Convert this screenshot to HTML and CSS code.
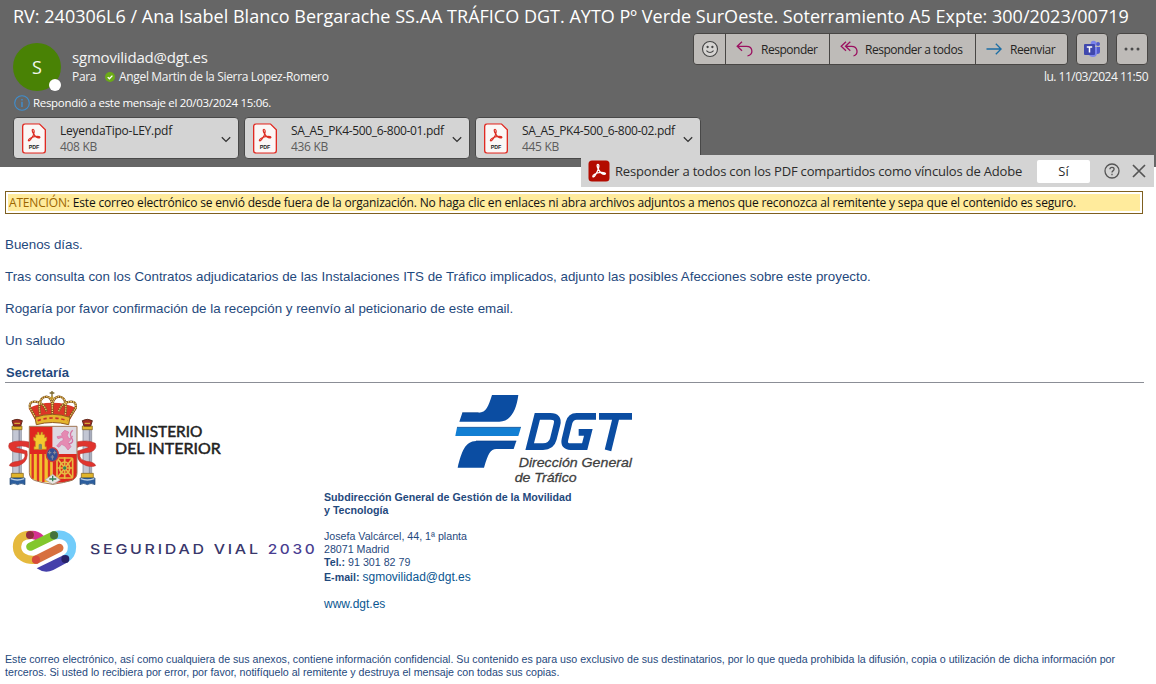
FILE: index.html
```html
<!DOCTYPE html>
<html lang="es">
<head>
<meta charset="utf-8">
<title>RV: 240306L6</title>
<link rel="stylesheet" href="styles.css">
</head>
<body>
<svg class="defs" width="0" height="0" aria-hidden="true">
  <symbol id="pdf" viewBox="0 0 72 92">
    <path d="M10 2H52L70 20V82Q70 90 62 90H10Q2 90 2 82V10Q2 2 10 2Z" fill="#fbf7f6" stroke="#e02a22" stroke-width="4"/>
    <path d="M34 19C29 18 30 25 35 32C39 39 46 45 52 44C57 42 50 38 40 40C30 42 19 47 19 52C22 56 29 45 33 38C37 30 38 20 34 19Z" fill="none" stroke="#dc2c22" stroke-width="3.6"/>
  </symbol>
  <symbol id="chev" viewBox="0 0 10 7"><path d="M.8 1.2L5 5.4L9.2 1.2" fill="none" stroke="#333" stroke-width="1.3"/></symbol>
</svg>
<header class="head">
  <h1 class="subject">RV: 240306L6 / Ana Isabel Blanco Bergarache SS.AA TRÁFICO DGT. AYTO Pº Verde SurOeste. Soterramiento A5 Expte: 300/2023/00719</h1>
  <div class="meta">
    <div class="avatar">S<span class="presence"></span></div>
    <div class="people">
      <div class="from">sgmovilidad@dgt.es</div>
      <div class="to"><span class="para">Para</span>
        <svg class="ok" viewBox="0 0 10 10"><circle cx="5" cy="5" r="5" fill="#6bab17"/><path d="M2.7 5.1L4.4 6.8L7.4 3.6" fill="none" stroke="#fff" stroke-width="1.3"/></svg>
        <span class="toname">Angel Martin de la Sierra Lopez-Romero</span></div>
    </div>
    <div class="side">
      <div class="actions">
        <div class="group">
          <button class="btn smile"><svg width="18" height="18" viewBox="0 0 18 18" fill="none" stroke="#454545" stroke-width="1.1"><circle cx="9" cy="9" r="7.5" fill="#d6d4d2"/><path d="M5.4 10.6Q9 14.3 12.6 10.6"/><circle cx="6.6" cy="7" r=".6" fill="#454545"/><circle cx="11.4" cy="7" r=".6" fill="#454545"/></svg></button>
          <button class="btn reply"><svg width="17" height="16" viewBox="0 0 17 16" fill="none" stroke="#9b1060" stroke-width="1.3"><path d="M6 .8L1.2 5.3L6 9.8M1.2 5.3H10.5C17.5 5.3 17.5 14.5 11.5 14.8"/></svg><span>Responder</span></button>
          <button class="btn all"><svg width="18" height="16" viewBox="0 0 18 16" fill="none" stroke="#9b1060" stroke-width="1.3"><path d="M6 .8L1.2 5.3L6 9.8M10.3 .8L5.5 5.3L10.3 9.8M5.5 5.3H11.5C18.5 5.3 18.5 14.5 13.5 14.8"/></svg><span>Responder a todos</span></button>
          <button class="btn fwd"><svg width="16" height="12" viewBox="0 0 16 12" fill="none" stroke="#1c6ea4" stroke-width="1.3"><path d="M.5 6H15M9.8 .7L15.1 6L9.8 11.3"/></svg><span>Reenviar</span></button>
        </div>
        <button class="btn solo"><svg width="18" height="18" viewBox="0 0 18 18"><circle cx="15" cy="4" r="2" fill="#5059c9"/><path d="M13 7H17V11.5Q17 14 14 14H12Z" fill="#5059c9"/><circle cx="10.5" cy="3.6" r="2.8" fill="#7b83eb"/><path d="M6 7H14V12.5Q14 17 9.8 17Q6 17 5.5 13Z" fill="#7b83eb"/><rect x="1" y="4" width="11" height="11" rx="1" fill="#4048ad"/><path d="M3.8 6.9H9.2M6.5 6.9V12.6" fill="none" stroke="#fff" stroke-width="1.5"/></svg></button>
        <button class="btn solo more"><svg width="16" height="4" viewBox="0 0 16 4" fill="#4b4b4b"><circle cx="2" cy="2" r="1.5"/><circle cx="8" cy="2" r="1.5"/><circle cx="14" cy="2" r="1.5"/></svg></button>
      </div>
      <div class="date"><span>lu. 11/03/2024 11:50</span></div>
    </div>
  </div>
  <div class="info"><svg width="16" height="16" viewBox="0 0 16 16" fill="none" stroke="#3f8fd0" stroke-width="1.1"><circle cx="8" cy="8" r="7.3"/><path d="M8 6.7V12M8 4V5.4" stroke-width="1.4"/></svg><span>Respondió a este mensaje el 20/03/2024 15:06.</span></div>
  <div class="files">
    <div class="file"><svg class="pdf" viewBox="0 0 72 92"><use href="#pdf" width="72" height="92"/><text x="20" y="77" textLength="32" lengthAdjust="spacingAndGlyphs">PDF</text></svg><div class="fn"><div class="name n1">LeyendaTipo-LEY.pdf</div><div class="size">408 KB</div></div><svg class="chev"><use href="#chev"/></svg></div>
    <div class="file"><svg class="pdf" viewBox="0 0 72 92"><use href="#pdf" width="72" height="92"/><text x="20" y="77" textLength="32" lengthAdjust="spacingAndGlyphs">PDF</text></svg><div class="fn"><div class="name">SA_A5_PK4-500_6-800-01.pdf</div><div class="size">436 KB</div></div><svg class="chev"><use href="#chev"/></svg></div>
    <div class="file"><svg class="pdf" viewBox="0 0 72 92"><use href="#pdf" width="72" height="92"/><text x="20" y="77" textLength="32" lengthAdjust="spacingAndGlyphs">PDF</text></svg><div class="fn"><div class="name">SA_A5_PK4-500_6-800-02.pdf</div><div class="size">445 KB</div></div><svg class="chev"><use href="#chev"/></svg></div>
  </div>
  <div class="adobe">
    <svg class="acro" width="22" height="22" viewBox="0 0 22 22"><rect x=".5" y=".5" width="21" height="21" rx="3.5" fill="#b30b00"/><path d="M10 4.3C8.6 4.2 9 7 10.4 9.3C12 12 15 14.5 17 14.2C18.8 13.2 15.5 12 12.3 12.4C8.5 13 4.4 14.7 4.8 16.5C6 18 8.2 13.7 9.4 11.3C10.7 8.5 11.6 4.5 10 4.3Z" fill="none" stroke="#fff" stroke-width="1.3"/></svg>
    <span class="adobe-text">Responder a todos con los PDF compartidos como vínculos de Adobe</span>
    <button class="yes">Sí</button>
    <svg class="help" width="16" height="16" viewBox="0 0 16 16" fill="none" stroke="#555" stroke-width="1.3"><circle cx="8" cy="8" r="7"/><path d="M5.9 6.3Q5.9 4.3 8 4.3Q10.1 4.3 10.1 6.1Q10.1 7.1 9 7.9Q8 8.6 8 9.6M8 10.8V12.2"/></svg>
    <svg class="close" width="14" height="14" viewBox="0 0 14 14" fill="none" stroke="#555" stroke-width="1.7"><path d="M1 1L13 13M13 1L1 13"/></svg>
  </div>
</header>
<main class="mail">
  <div class="warn"><p><span class="att">ATENCIÓN:</span> <span class="wt">Este correo electrónico se envió desde fuera de la organización. No haga clic en enlaces ni abra archivos adjuntos a menos que reconozca al remitente y sepa que el contenido es seguro.</span></p></div>
  <div class="text">
    <p>Buenos días.</p>
    <p class="p2">Tras consulta con los Contratos adjudicatarios de las Instalaciones ITS de Tráfico implicados, adjunto las posibles Afecciones sobre este proyecto.</p>
    <p class="p3">Rogaría por favor confirmación de la recepción y reenvío al peticionario de este email.</p>
    <p>Un saludo</p>
    <p class="sec">Secretaría</p>
  </div>
  <section class="sig">
    <svg class="crest" viewBox="0 15 720 318" width="240" height="106">
      <g stroke-linejoin="round">
        <path d="M38 148H64V282H38ZM249 148H275V282H249Z" fill="#c3c7d4" stroke="#777b8a" stroke-width="2"/>
        <path d="M58 150V280M269 150V280" stroke="#8f94a6" stroke-width="5"/>
        <path d="M36 138H66V149H36ZM247 138H277V149H247ZM34 280H70V294H34ZM244 280H280V294H244Z" fill="#e0b52b" stroke="#7c5b1b" stroke-width="2"/>
        <path d="M30 294H75V314Q63 307 53 314Q42 307 30 314ZM240 294H285V314Q273 307 262 314Q251 307 240 314Z" fill="#2c5e9e" stroke="#234872" stroke-width="2"/>
        <path d="M32 296Q52 304 73 296M242 296Q262 304 283 296" fill="none" stroke="#b9cde0" stroke-width="4"/>
        <path d="M36 122Q51 114 67 122L62 138H41ZM247 122Q262 114 277 122L272 138H252Z" fill="#a52b22" stroke="#5f2b1d" stroke-width="3"/>
        <path d="M43 130H60M254 130H270" stroke="#d7a93a" stroke-width="4"/>
        <path d="M88 186Q50 178 28 190Q20 208 42 216L74 221Q80 238 54 244Q30 246 28 257Q48 264 66 252Q86 240 81 213Q65 208 46 202Q66 193 88 204ZM228 186Q264 178 286 190Q293 208 272 216L240 221Q235 238 260 244Q284 246 287 257Q268 264 248 252Q228 240 232 213Q250 208 267 202Q248 193 228 204Z" fill="#e0342e" stroke="#b3302c" stroke-width="1.5"/>
        <path d="M88 139H158V224H88Z" fill="#e02720"/>
        <path d="M158 139H231V224H158Z" fill="#ddd9e2"/>
        <path d="M88 222H158V308Q120 308 100 298Q88 292 88 278Z" fill="#f2c12d"/>
        <path d="M98 222V296M114 222V303M130 222V306M147 222V306" stroke="#dc3127" stroke-width="7"/>
        <path d="M158 222H231V278Q231 292 218 300Q194 310 158 308Z" fill="#dc281f"/>
        <path d="M102 208V200H106V184L101 181V171L107 174V164H112V157H117V164H123V157H128V164H134V174L140 171V182L135 185V200H139V208Z" fill="#f4c92e" stroke="#c08a24" stroke-width="2"/>
        <path d="M116 208V194Q121 188 126 194V208Z" fill="#7d8a6a"/>
        <path d="M184 161L194 151L206 156L202 166L207 177L218 168L211 181L205 187L213 200L204 210L195 198L185 193L177 202L170 198L181 185L190 181L188 172L174 176L171 170L187 167Z" fill="#e58ab2" stroke="#d573a2" stroke-width="2"/>
        <path d="M206 192Q225 189 214 172Q207 161 218 151" fill="none" stroke="#d573a2" stroke-width="4"/>
        <g stroke="#e7ba42" fill="none" stroke-width="5"><rect x="171" y="234" width="47" height="60" rx="5"/><path d="M171 234L218 294M218 234L171 294M194 232V297M170 264H219"/><ellipse cx="194" cy="264" rx="15" ry="18"/></g>
        <circle cx="194" cy="264" r="5" fill="#368253"/>
        <path d="M136 299L158 283L181 300L158 313Z" fill="#e9e7e5" stroke="#aaa" stroke-width="2"/>
        <path d="M158 287V304M148 297H169" stroke="#3a8055" stroke-width="4"/>
        <path d="M88 139H231V278Q231 294 216 301Q194 308 158 313Q122 308 103 301Q88 294 88 278Z" fill="none" stroke="#a07655" stroke-width="3"/>
        <ellipse cx="157" cy="224" rx="18" ry="21" fill="#344f93" stroke="#cc3b3b" stroke-width="4"/>
        <path d="M149 212V223M164 212V223M157 225V239M144 218H154M159 218H169M152 231H162" stroke="#8d8f9a" stroke-width="3"/>
        <path d="M104 118L86 85Q115 68 157 68Q200 68 230 85L211 118Q158 108 104 118Z" fill="#db3627"/>
        <path d="M108 115L90 84Q86 63 106 65Q130 66 140 94M207 115L227 84Q231 63 211 65Q187 66 176 94M120 103Q112 51 140 50Q157 51 157 85M196 103Q203 51 177 50Q157 51 157 85V102" fill="none" stroke="#80521e" stroke-width="7"/>
        <path d="M108 115L90 84Q86 63 106 65Q130 66 140 94M207 115L227 84Q231 63 211 65Q187 66 176 94M120 103Q112 51 140 50Q157 51 157 85M196 103Q203 51 177 50Q157 51 157 85V102" fill="none" stroke="#f3d36b" stroke-width="4" stroke-dasharray="4 3"/>
        <path d="M105 112Q157 94 210 112L206 134Q157 121 109 134Z" fill="#e5b52d" stroke="#915a20" stroke-width="3"/>
        <path d="M113 122Q157 106 202 122" fill="none" stroke="#c93028" stroke-width="5" stroke-dasharray="10 8"/>
        <path d="M156 33V51M149 39H163" stroke="#78652b" stroke-width="4"/><circle cx="156" cy="54" r="5" fill="#c69b2e"/>
      </g>
      <g font-family="Lato, sans-serif" font-size="45" fill="#222" stroke="#222" stroke-width="1.4"><text x="345" y="171" textLength="262" lengthAdjust="spacingAndGlyphs">MINISTERIO</text><text x="345" y="222" textLength="317" lengthAdjust="spacingAndGlyphs">DEL INTERIOR</text></g>
    </svg>
    <svg class="dgt" viewBox="0 15 660 318" width="220" height="106">
      <path d="M156 45H235C229 92 211 125 178 125H58L67 98H116C139 98 145 78 156 45Z" fill="#0b4da2"/>
      <path d="M51 142H243L235 168H46Z" fill="#127fd3"/>
      <path d="M108 183H229L221 207H169C151 207 145 221 132 263H53C65 213 76 184 108 183Z" fill="#0b4da2"/>
      <path d="M51 142H243M67 98H116M108 183H229" stroke="#083e88" stroke-width="2"/>
      <g fill="none" stroke="#0b4da2" stroke-width="20"><path d="M292 109H331Q357 109 351 133L340 177Q334 200 309 200H269Z"/><path d="M468 109H410Q392 109 387 128L375 178Q370 200 392 200H434L445 157H416"/><path d="M477 109H576M529 109L504 211"/></g>
      <g font-family="Liberation Sans, Arial, sans-serif" font-style="italic" font-size="40" fill="#404040" stroke="#404040" stroke-width=".8"><text x="236" y="262" textLength="340" lengthAdjust="spacingAndGlyphs">Dirección General</text><text x="224" y="306" textLength="186" lengthAdjust="spacingAndGlyphs">de Tráfico</text></g>
    </svg>
    <svg class="vial" viewBox="0 0 960 240" width="320" height="80">
      <g fill="none" stroke-linecap="round" stroke-width="25">
        <path d="M90 75Q108 72 122 86" stroke="#d53191" stroke-linecap="butt"/>
        <path d="M108 149C80 153 51 139 51 110C51 88 65 75 90 75" stroke="#e5b93d"/>
        <path d="M162 76C195 68 216 88 216 110C216 130 209 138 196 147" stroke="#72ccfa"/>
        <path d="M91 110L162 76" stroke="#83c72d"/><path d="M108 149L178 114" stroke="#d7703f"/>
      </g>
      <path d="M110 175L190 136L203 157L160 180Q134 192 110 175Z" fill="#4540aa"/>
      <circle cx="90" cy="75" r="12" fill="#922b43"/><circle cx="162" cy="76" r="12" fill="#44723d"/><circle cx="108" cy="149" r="12" fill="#d64b3c"/><circle cx="196" cy="147" r="12" fill="#282267"/>
      <g font-family="Inter, sans-serif" font-size="41" font-weight="500" letter-spacing="7"><text x="270" y="133" textLength="512" lengthAdjust="spacingAndGlyphs" fill="#39376b">SEGURIDAD VIAL</text><text x="803" y="133" textLength="149" lengthAdjust="spacingAndGlyphs" fill="#493d91">2030</text></g>
    </svg>
    <address class="contact">
      <b class="c1">Subdirección General de Gestión de la Movilidad</b><b class="c2">y Tecnología</b>
      <span class="gap c3">Josefa Valcárcel, 44, 1ª planta</span><span>28071 Madrid</span><span><b>Tel.:</b> 91 301 82 79</span>
      <span class="mailrow"><b>E-mail:</b> <a>sgmovilidad@dgt.es</a></span>
      <a class="web">www.dgt.es</a>
    </address>
  </section>
  <footer class="legal"><div class="l1">Este correo electrónico, así como cualquiera de sus anexos, contiene información confidencial. Su contenido es para uso exclusivo de sus destinatarios, por lo que queda prohibida la difusión, copia o utilización de dicha información por</div><div class="l2">terceros. Si usted lo recibiera por error, por favor, notifíquelo al remitente y destruya el mensaje con todas sus copias.</div></footer>
</main>
</body>
</html>
```

FILE: styles.css
```css
* { box-sizing: border-box; }
body { margin: 0; width: 1156px; height: 684px; overflow: hidden; background: #fff; font-family: "Open Sans", "Noto Sans", sans-serif; }
h1, p { margin: 0; font-weight: 400; }
svg { display: block; flex: none; }
.defs { position: absolute; }
button { font: inherit; margin: 0; padding: 0; border: 0; }
.head { position: relative; height: 167px; background: #666; color: #f5f5f5; white-space: nowrap; }
.subject { height: 33px; padding-left: 13px; font-size: 18px; line-height: 33px; letter-spacing: 0.01px; color: #fff; }
.meta { display: flex; height: 60px; padding: 0 8px 0 13px; }
.avatar { position: relative; display: flex; align-items: center; justify-content: center; width: 48px; height: 48px; margin-top: 10px; border-radius: 50%; background: #498205; font-size: 18px; line-height: 26px; color: #f4f8ef; }
.presence { position: absolute; right: 0; bottom: 0; width: 12px; height: 12px; border-radius: 50%; background: #fff; }
.people { margin-left: 11px; padding-top: 15px; }
.from { height: 19px; font-size: 15px; line-height: 19px; letter-spacing: -0.2px; }
.to { display: flex; align-items: center; height: 19px; font-size: 12px; letter-spacing: -0.33px; }
.para { width: 33px; }
.ok { width: 10px; height: 10px; margin-right: 4px; }
.side { margin-left: auto; }
.actions { display: flex; gap: 8px; }
.group { display: flex; border: 1px solid #484644; border-radius: 4px; overflow: hidden; }
.btn { display: flex; align-items: center; height: 30px; background: #bebbb8; color: #252423; font-size: 12px; letter-spacing: -0.47px; }
.group .btn + .btn { border-left: 1px solid #484644; }
.smile { width: 31px; justify-content: center; }
.reply { width: 104px; padding-left: 10px; }
.reply span { margin-left: 8px; }
.all span { margin-left: 7px; }
.all { width: 146px; padding-left: 10px; }
.fwd { width: 92px; padding-left: 10px; }
.fwd span { margin-left: 8px; }
.solo { width: 32px; height: 32px; justify-content: center; border: 1px solid #484644; border-radius: 4px; }
.date { height: 22px; line-height: 23px; font-size: 12px; text-align: right; letter-spacing: -0.5px; }
.info { display: flex; align-items: center; gap: 3px; height: 20px; padding-left: 14px; font-size: 11.5px; color: #fff; letter-spacing: -0.31px; }
.info span { line-height: 16px; margin-top: -1px; }
.files { display: flex; gap: 5px; margin-top: 4px; padding-left: 13px; }
.file { display: flex; width: 226px; height: 42px; padding: 5px 7px 5px 8px; border: 1px solid #484848; border-radius: 4px; background: #d4d4d4; }
.pdf { width: 24px; height: 31px; font: 700 18px "Liberation Sans", Arial, sans-serif; fill: #222; }
.fn { margin-left: 14px; flex: 1; color: #242424; font-size: 12px; }
.name { height: 16px; line-height: 16px; letter-spacing: -0.32px; }
.n1 { letter-spacing: -0.25px; }
.size { height: 16px; line-height: 16px; color: #5c5c5c; letter-spacing: -0.3px; }
.chev { width: 10px; height: 7px; margin-top: 13px; }
.adobe { position: absolute; left: 581px; top: 155px; display: flex; align-items: center; width: 573px; height: 32px; padding-left: 7px; background: #d4d4d4; color: #2c2c2c; }
.adobe-text { width: 408px; margin-left: 5px; font-size: 13px; letter-spacing: -0.18px; }
.yes { width: 53px; height: 23px; margin-left: 14px; border-radius: 2px; background: #fff; font-size: 13px; color: #2c2c2c; }
.help { margin-left: 14px; }
.close { margin-left: 12px; }
.mail { padding: 24px 12px 0 5px; font-family: "Liberation Sans", Arial, sans-serif; color: #1f497d; white-space: nowrap; }
.warn { width: 1138px; height: 23px; padding: 2px; border: 1px solid #7f6020; }
.warn p { height: 17px; padding-left: 1px; background: #ffeb9c; color: #111; font: 12px/18px "Open Sans", "Noto Sans", sans-serif; letter-spacing: -0.17px; }
.att { color: #9c6500; }
.text { padding-top: 15px; font-size: 13.33px; }
.text p { height: 32px; line-height: 32px; }
.p2 { letter-spacing: 0.012px; }
.text .sec { padding-left: 1px; font-weight: 700; font-size: 13px; }
.sig { display: grid; grid-template-columns: 319px 1fr; grid-template-rows: 106px 147px; width: 1139px; margin-top: -7px; border-top: 1px solid #8b8e96; }
.crest { margin: 2px 0 0 -5px; }
.dgt { margin: 2px 0 0 116px; }
.vial { margin: 21px 0 0 -5px; }
.contact { display: flex; flex-direction: column; padding-top: 2px; font-size: 10.67px; font-style: normal; line-height: 13px; }
.gap { margin-top: 13px; }
.mailrow { line-height: 16px; }
.mailrow a, .web { font-size: 12px; color: #0a5691; }
.web { margin-top: 13px; }
.legal { margin-top: 17px; font-size: 10.67px; line-height: 13px; }
```
